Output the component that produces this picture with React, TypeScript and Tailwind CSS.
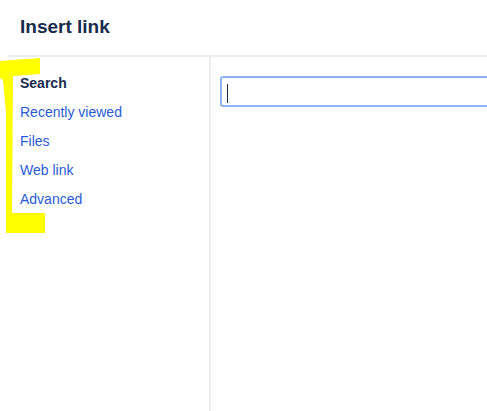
import React from 'react';

const navItems = ['Recently viewed', 'Files', 'Web link', 'Advanced'];

// 노란 형광펜 표시
const Highlighter = () => (
  <svg className="absolute left-0 top-0 pointer-events-none" width="60" height="240" viewBox="0 0 60 240">
    <path
      d="M0 61 L40 58 L40 74 L13 76 L12 213 L45 213 L45 233 L6 233 L6 112 L3 80 L0 78 Z"
      fill="#ffff00"
    />
  </svg>
);

export default function App() {
  return (
    <div className="relative w-[487px] h-[411px] bg-white overflow-hidden font-['Segoe_UI','Liberation_Sans',sans-serif] text-[#172b4d]">
      <div className="h-[55px] pl-5 pt-[14px]">
        <h1 className="text-[19px] leading-[26px] font-semibold">Insert link</h1>
      </div>
      <div className="ml-2 h-[2px] bg-[#ebecf0]" />
      <div className="flex h-[354px]">
        <div className="w-[211px] shrink-0 border-r-2 border-[#ebecf0] pl-5 pt-[12px]">
          <div className="text-[14px] leading-[29px] font-bold">Search</div>
          {navItems.map((item) => (
            <div key={item} className="text-[14px] leading-[29px] text-[#2a5bd7]">
              {item}
            </div>
          ))}
        </div>
        <div className="flex-1 pl-[9px] pt-[19px]">
          <div className="h-[31px] w-[320px] rounded-[3px] border-2 border-[#8db3f2] pl-[5px] pt-[6px]">
            <div className="h-[19px] w-px bg-[#172b4d]" />
          </div>
        </div>
      </div>
      <Highlighter />
    </div>
  );
}
